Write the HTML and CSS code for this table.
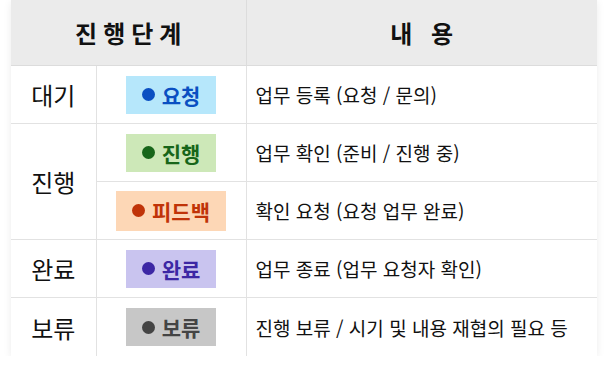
FILE: index.html
```html
<!DOCTYPE html>
<html lang="ko">
<head>
<meta charset="utf-8">
<link rel="stylesheet" href="styles.css">
</head>
<body>
<div class="wrap">
<table class="stages">
  <colgroup>
    <col class="c1"><col class="c2"><col class="c3">
  </colgroup>
  <thead>
    <tr><th colspan="2" class="h-stage">진행단계</th><th class="h-desc">내 용</th></tr>
  </thead>
  <tbody>
    <tr>
      <td class="stage">대기</td>
      <td class="badge-cell"><span class="badge b-req"><span class="dot"></span>요청</span></td>
      <td class="desc">업무 등록 (요청 / 문의)</td>
    </tr>
    <tr>
      <td class="stage" rowspan="2">진행</td>
      <td class="badge-cell"><span class="badge b-prog"><span class="dot"></span>진행</span></td>
      <td class="desc">업무 확인 (준비 / 진행 중)</td>
    </tr>
    <tr>
      <td class="badge-cell"><span class="badge b-fb"><span class="dot"></span>피드백</span></td>
      <td class="desc">확인 요청 (요청 업무 완료)</td>
    </tr>
    <tr>
      <td class="stage">완료</td>
      <td class="badge-cell"><span class="badge b-done"><span class="dot"></span>완료</span></td>
      <td class="desc">업무 종료 (업무 요청자 확인)</td>
    </tr>
    <tr>
      <td class="stage">보류</td>
      <td class="badge-cell"><span class="badge b-hold"><span class="dot"></span>보류</span></td>
      <td class="desc">진행 보류 / 시기 및 내용 재협의 필요 등</td>
    </tr>
  </tbody>
</table>
</div>
</body>
</html>
```

FILE: styles.css
```css
html, body {
  margin: 0;
  padding: 0;
  background: #ffffff;
}
body {
  font-family: "Noto Sans CJK KR", "Noto Sans", sans-serif;
  color: #111;
}
.wrap {
  padding: 0 11px;
}
.stages {
  width: 586px;
  border-collapse: collapse;
  table-layout: fixed;
  background: #fff;
  box-shadow: 0 2px 8px rgba(0, 0, 0, 0.08);
}
.c1 { width: 85px; }
.c2 { width: 150px; }
.c3 { width: 351px; }
.stages th {
  height: 65px;
  padding: 0;
  background: #ebebeb;
  font-size: 24px;
  font-weight: 700;
  border-bottom: 1px solid #dcdcdc;
  border-right: 1px solid #dcdcdc;
}
.stages th:last-child { border-right: none; }
.h-stage { letter-spacing: 6px; text-indent: 6px; }
.h-desc { letter-spacing: 6px; text-indent: 6px; }
.stages td {
  height: 57px;
  padding: 0;
  border-bottom: 1px solid #e2e2e2;
  border-right: 1px solid #e2e2e2;
}
.stages td.desc { border-right: none; }
.stages tr:last-child td { border-bottom: none; height: 58px; }
.stage {
  text-align: center;
  font-size: 24px;
}
.badge-cell { text-align: center; }
.badge {
  display: inline-flex;
  align-items: center;
  gap: 7px;
  height: 38px;
  padding: 0 16px;
  font-size: 21px;
  font-weight: 700;
  vertical-align: middle;
}
.dot {
  width: 13px;
  height: 13px;
  border-radius: 50%;
  background: currentColor;
}
.b-req { background: #b6e7fb; color: #0a4fc2; }
.b-prog { background: #cde8b8; color: #17661a; }
.b-fb { background: #fdd7b6; color: #c03308; height: 40px; }
.b-done { background: #c9c4ef; color: #3c27a4; }
.b-hold { background: #c7c7c7; color: #444444; }
.desc {
  padding-left: 9px !important;
  font-size: 19px;
  color: #111;
}
```
